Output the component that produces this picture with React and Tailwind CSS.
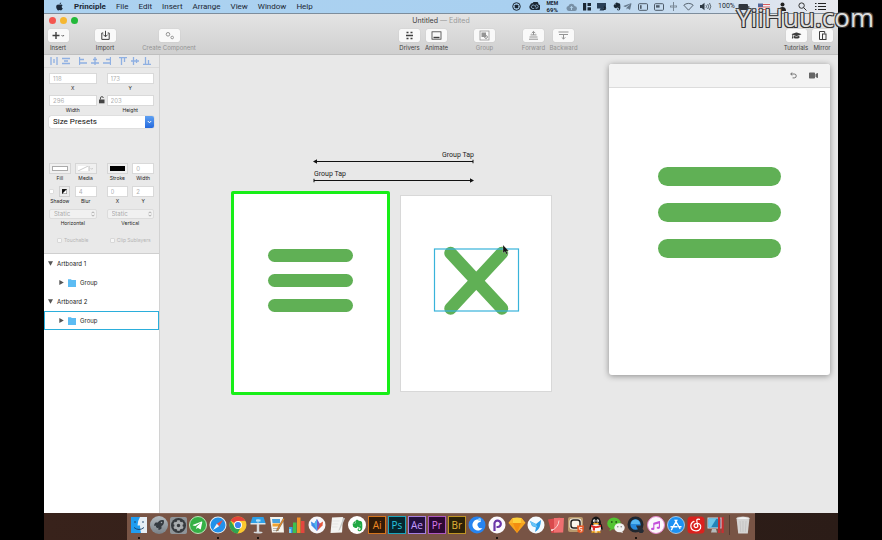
import { useState } from 'react'
import { FaApple, FaEvernote, FaTelegramPlane, FaRocket, FaCog, FaMusic, FaGraduationCap, FaVideo } from 'react-icons/fa'

const menus = ['File', 'Edit', 'Insert', 'Arrange', 'View', 'Window', 'Help']

function MenuBar() {
  return (
    <header className="h-[13px] shrink-0 flex items-center justify-between pl-[11px] pr-3 bg-gradient-to-r from-[#acd2f0] via-[#a9d0f0] via-60% to-[#e9e9ee] font-[Roboto,sans-serif] text-[8px] leading-[13px] text-[#1b2733]">
      <nav className="flex items-center gap-[10px]">
        <a href="#apple" aria-label="Apple"><FaApple className="w-[9px] h-[9px] text-[#1c2a3a]" /></a>
        <a href="#principle" className="font-bold">Principle</a>
        {menus.map((m) => (
          <a key={m} href={`#${m}`}>{m}</a>
        ))}
      </nav>
      <div className="flex items-center gap-[6px]">
        <svg className="w-[9px] h-[9px]" viewBox="0 0 9 9">
          <circle cx="4.5" cy="4.5" r="3.8" fill="none" stroke="#1b2733" />
          <rect x="2.7" y="2.7" width="3.6" height="3.6" rx=".6" fill="#1b2733" />
        </svg>
        <svg className="w-[11px] h-[9px] ml-[2px]" viewBox="0 0 11 9">
          <path d="M3.800 1A3 3 0 0 1 9.500 2.500 2.800 2.800 0 0 1 8.200 8H3A3 3 0 0 1 1 3.200 3 3 0 0 1 3.800 1z" fill="#1b2733" />
          <path d="M5.200 6.300a1.800 1.800 0 1 1 .2-2.800L7.400 5.600M6.200 3.500a1.700 1.700 0 1 1 .3 2.600" fill="none" stroke="#a9d0f0" strokeWidth=".7" />
        </svg>
        <div className="flex flex-col items-center font-bold">
          <span className="text-[5px] leading-[6px]">MEM</span>
          <span className="text-[6px] leading-[7px]">69%</span>
        </div>
        <svg className="w-[11px] h-[8px] ml-[2px]" viewBox="0 0 11 8">
          <path d="M2.8 8a2.6 2.6 0 0 1-.4-5.1A3.3 3.3 0 0 1 8.6 3 2.5 2.5 0 0 1 8.300 8z" fill="#7890a6" />
          <path d="M5.500 7V3.600M4 4.900l1.500-1.500L7 4.900" fill="none" stroke="#b8d8f0" strokeWidth=".9" />
        </svg>
        <svg className="w-[8px] h-[9px]" viewBox="0 0 8 9">
          <path d="M0 1h3.200v7.500H0zM4.500 1H8v3H4.500zM4.500 5.300H8v3.200H4.500z" fill="#1b2733" />
        </svg>
        <svg className="w-[10px] h-[9px]" viewBox="0 0 10 9">
          <path d="M0 1h9v5.500H6L7 8.500H2.500l1-2H0z" fill="#2a3f57" />
          <path d="M7 3.500l2.500 2.700H8.700v1.800H5.500l1.200-2z" fill="#1b2733" />
        </svg>
        <FaEvernote className="w-[8px] h-[9px]" />
        <FaTelegramPlane className="w-[9px] h-[9px] -ml-1 text-[#66798c]" />
        <svg className="w-[10px] h-[8px]" viewBox="0 0 10 8">
          <rect x=".5" y=".7" width="9" height="6.600" rx="1" fill="none" stroke="#4d5a68" />
          <rect x="2" y="2.200" width="1.600" height="3.600" fill="#4d5a68" />
        </svg>
        <svg className="w-[10px] h-[8px]" viewBox="0 0 10 8">
          <rect x=".5" y=".7" width="9" height="6.600" rx="1" fill="none" stroke="#4d5a68" />
          <rect x="2" y="2.200" width="3.600" height="2.400" fill="#4d5a68" />
        </svg>
        <svg className="w-[7px] h-[9px]" viewBox="0 0 7 9">
          <path d="M.5 3.500v2M2 3v3M3.500 0v9M5 3v3M6.500 3.500v2" stroke="#65717d" strokeWidth=".8" />
        </svg>
        <svg className="w-[11px] h-[9px]" viewBox="0 0 11 9">
          <path d="M.8 3.200a7 7 0 0 1 9.400 0L5.500 8.200z" fill="none" stroke="#3c4752" strokeWidth=".8" />
        </svg>
        <svg className="w-[12px] h-[9px]" viewBox="0 0 12 9">
          <path d="M0 3h1.800L4.500.8v7.400L1.800 6H0z" fill="#2f3a45" />
          <path d="M6 3.200q1 1.300 0 2.600M7.700 2q1.800 2.500 0 5M9.500 1q2.500 3.500 0 7" fill="none" stroke="#3c4752" strokeWidth=".8" />
        </svg>
        <span className="text-[7px]">100%</span>
        <svg className="w-[12px] h-[8px] -ml-[3px]" viewBox="0 0 12 8">
          <rect x=".5" y="1" width="9.500" height="6" rx="1" fill="#30363e" />
          <path d="M10.800 3v2" stroke="#30363e" />
        </svg>
        <svg className="w-[12px] h-[8px] ml-[2px]" viewBox="0 0 12 8">
          <rect y=".5" width="12" height="7" fill="#f1f1f4" />
          <path d="M5 1.500h7M0 4h12M0 6.500h12" stroke="#d65a60" />
          <rect y=".5" width="5" height="3.500" fill="#52669a" />
        </svg>
        <svg className="w-[7px] h-[9px] ml-[3px]" viewBox="0 0 7 9">
          <circle cx="3.500" cy="2.500" r="2" fill="#222" />
          <path d="M0 9q0-4 3.500-4T7 9z" fill="#222" />
        </svg>
        <svg className="w-[9px] h-[9px] ml-[6px]" viewBox="0 0 9 9">
          <circle cx="3.600" cy="3.600" r="2.700" fill="none" stroke="#333" />
          <path d="M5.600 5.600l2.900 2.900" stroke="#333" />
        </svg>
        <svg className="w-[11px] h-[9px] ml-[2px]" viewBox="0 0 11 9">
          <path d="M0 1.500h1.500M3 1.500h8M0 4.500h1.500M3 4.500h8M0 7.500h1.500M3 7.500h8" stroke="#222" />
        </svg>
      </div>
    </header>
  )
}

function Tool({ label, dim, children }) {
  return (
    <button className={`w-[22px] flex flex-col items-center gap-[2px] ${dim ? 'text-[#949494]' : 'text-[#3f3f3f]'}`}>
      <span className="w-[21px] h-[13px] rounded-[2px] bg-[#f9f9f9] flex items-center justify-center shadow-[0_0_1px_rgba(0,0,0,0.2)]">
        <svg className="w-[15px] h-[11px]" viewBox="0 0 15 11" fill="none" stroke="currentColor">{children}</svg>
      </span>
      <span className="text-[6px] leading-[8px] whitespace-nowrap">{label}</span>
    </button>
  )
}

function Toolbar() {
  return (
    <div className="shrink-0 border-t border-[#7d8d9c] border-b border-b-[#bfbfbf] bg-gradient-to-b from-[#e4e4e4] to-[#d0d0d0] pb-[2px]">
      <div className="grid grid-cols-[1fr_auto_1fr] items-center px-[5px] h-[13px]">
        <div className="flex gap-[4px]">
          <button aria-label="Close" className="w-[7px] h-[7px] rounded-full bg-[#f4564f]" />
          <button aria-label="Minimize" className="w-[7px] h-[7px] rounded-full bg-[#f5b731]" />
          <button aria-label="Zoom" className="w-[7px] h-[7px] rounded-full bg-[#23b93a]" />
        </div>
        <h1 className="text-[7px] leading-[12px] text-[#3c3c3c]">Untitled <span className="text-[#9a9a9a]">— Edited</span></h1>
      </div>
      <div className="flex pl-[3px] pr-[5px] pt-[2px]">
        <Tool label="Insert">
          <path d="M5 2v7M1.500 5.500h7" strokeWidth="1.400" />
          <path d="M10.500 5l1.300 1.300L13.100 5" strokeWidth=".8" />
        </Tool>
        <div className="w-[25px]" />
        <Tool label="Import"><path d="M5.300 3H3.800v6.400h7.400V3H9.700M7.500.8v5.700M5.300 4.600l2.200 2.200 2.200-2.200" /></Tool>
        <div className="w-[42px]" />
        <Tool label="Create Component" dim>
          <circle cx="6" cy="4.300" r="1.800" />
          <circle cx="10.200" cy="7.500" r="1.300" />
        </Tool>
        <div className="flex-1" />
        <div className="flex ml-2">
          <Tool label="Drivers">
            <path d="M4.500 2.500h2M8.500 2.500h2M4 5.500h7M4.500 8.500h2M8.500 8.500h2" strokeWidth="1.500" />
          </Tool>
          <div className="w-[5px]" />
          <Tool label="Animate">
            <rect x="3" y="1.800" width="9" height="7.400" strokeWidth=".8" />
            <path d="M4.500 7.500h6" strokeWidth="1.400" />
          </Tool>
          <div className="w-[26px]" />
          <Tool label="Group" dim>
            <rect x="3" y="1" width="9" height="9" strokeWidth=".8" />
            <rect x="5" y="3" width="3.500" height="3.500" fill="currentColor" />
            <circle cx="9" cy="7" r="1.400" />
          </Tool>
          <div className="w-[27px]" />
          <Tool label="Forward" dim>
            <path d="M3 9.200h9M3.500 7h8M4.500 4.900h6M7.500 5V1.500M5.700 3.200l1.800-1.800 1.800 1.800" />
          </Tool>
          <div className="w-[8px]" />
          <Tool label="Backward" dim>
            <path d="M2.500 2h10M3 4.500h9M7.500 4.500v4.500M5.700 7.300l1.800 1.800 1.800-1.800" />
          </Tool>
        </div>
        <div className="flex-1" />
        <Tool label="Tutorials"><FaGraduationCap x="2.500" y=".5" size="10" stroke="none" /></Tool>
        <div className="w-[4px]" />
        <Tool label="Mirror">
          <path d="M8 9.500H4.500v-8h5.200v2" />
          <rect x="7.500" y="4" width="3.500" height="5.500" />
        </Tool>
      </div>
    </div>
  )
}

const aligns = [
  { name: 'Distribute horizontally', d: 'M1 0v8M7 0v8M4 2v4', cls: 'mr-[4px]' },
  { name: 'Distribute vertically', d: 'M0 1.500h8M0 6.500h8M2 4h4', cls: 'mr-[9px]' },
  { name: 'Align left', d: 'M.5 0v8M1 2.500h4M1 6h7', cls: 'mr-[4px]' },
  { name: 'Align center', d: 'M4 0v8M2 2.500h4M0 6h8', cls: 'mr-[4px]' },
  { name: 'Align right', d: 'M7.500 0v8M3 2.500h4M0 6h7', cls: 'mr-[8px]' },
  { name: 'Align top', d: 'M0 .5h8M2.500 1v7M5.500 1v4', cls: 'mr-[4px]' },
  { name: 'Align middle', d: 'M0 4h8M2.500 0v8M5.500 2v4', cls: 'mr-[4px]' },
  { name: 'Align bottom', d: 'M0 7.500h8M2.500 0v7M5.500 3v4', cls: '' },
]

function Field({ label, value }) {
  return (
    <label className="flex-1 min-w-0 flex flex-col items-center">
      <input defaultValue={value} className="w-full h-[11px] px-[3px] bg-white border border-[#d9d9d9] text-[6px] leading-[9px] text-[#b0b0b0] outline-none" />
      <span className="leading-[8px]">{label}</span>
    </label>
  )
}

function Well({ label, children }) {
  return (
    <div className="flex-1 min-w-0 flex flex-col items-center">
      <button aria-label={label} className="w-full h-[11px] p-[2px] border border-[#d6d6d6] bg-[#f0f0f0] flex">{children}</button>
      <span className="leading-[8px]">{label}</span>
    </div>
  )
}

function StaticSelect({ label }) {
  return (
    <label className="flex-1 flex flex-col items-center">
      <span className="relative w-full flex">
        <select className="appearance-none w-full h-[10px] px-[4px] rounded-[2px] border border-[#dcdcdc] bg-[#f1f1f1] text-[6px] leading-[8px] text-[#aaa]">
          <option>Static</option>
        </select>
        <svg className="absolute right-[2px] top-[2px] w-[4px] h-[6px]" viewBox="0 0 4 6">
          <path d="M.5 2.300 2 .8l1.500 1.500M.5 3.700 2 5.200l1.500-1.500" fill="none" stroke="#999" strokeWidth=".8" />
        </svg>
      </span>
      <span className="leading-[9px]">{label}</span>
    </label>
  )
}

function Check({ label }) {
  return (
    <label className="flex-1 flex items-center justify-center gap-[2px] text-[#b5b5b5] whitespace-nowrap">
      <input type="checkbox" className="appearance-none w-[5px] h-[5px] rounded-[1px] bg-[#f6f6f6] border border-[#d8d8d8]" />
      {label}
    </label>
  )
}

function Inspector() {
  return (
    <section className="bg-[#e9e9e9] text-[5px] text-[#222] border-b border-[#cfcfcf] pb-[9px]">
      <div className="flex items-center h-[13px] px-[6px] border-b border-[#dadada]">
        {aligns.map((a) => (
          <button key={a.name} aria-label={a.name} className={a.cls}>
            <svg className="w-[8px] h-[8px]" viewBox="0 0 8 8">
              <path d={a.d} fill="none" stroke="#8fb0e2" strokeWidth="1.300" />
            </svg>
          </button>
        ))}
      </div>
      <div className="px-[5px] pt-[5px]">
        <div className="flex gap-[10px] mb-[3px]">
          <Field label="X" value="118" />
          <Field label="Y" value="173" />
        </div>
        <div className="flex mb-[2px]">
          <Field label="Width" value="296" />
          <svg className="w-[10px] h-[10px] px-[2px]" viewBox="0 0 6 10">
            <rect y="4.500" width="5.500" height="3.800" fill="#444" />
            <path d="M1.500 4.500V3a1.400 1.400 0 0 1 2.800 0" fill="none" stroke="#444" strokeWidth=".9" />
          </svg>
          <Field label="Height" value="203" />
        </div>
        <div className="relative flex">
          <select aria-label="Size Presets" className="appearance-none w-full h-[12px] px-[4px] rounded-[2px] bg-white shadow-[0_0_1px_rgba(0,0,0,0.4)] font-[Roboto,sans-serif] text-[8px] leading-[12px] text-[#111]">
            <option>Size Presets</option>
          </select>
          <span className="absolute right-0 inset-y-0 w-[9px] rounded-r-[2px] bg-gradient-to-b from-[#5ea0f2] to-[#2569dd] flex items-center justify-center pointer-events-none">
            <svg className="w-[5px] h-[4px]" viewBox="0 0 5 4"><path d="M.8 1 2.500 2.800 4.200 1" fill="none" stroke="#fff" /></svg>
          </span>
        </div>
        <div className="flex gap-[10px] pt-[35px] mb-[4px]">
          <div className="flex-1 flex gap-[4px]">
            <Well label="Fill"><span className="flex-1 h-full bg-white border border-[#aaa]" /></Well>
            <Well label="Media">
              <svg className="w-full h-full" viewBox="0 0 17 5" preserveAspectRatio="none">
                <path d="M0 0h11v5H0z" fill="#fff" />
                <path d="M0 5 11 0M12 0v5" fill="none" stroke="#bbb" strokeWidth=".8" />
                <path d="M13.500 2l1.300 1.300L16 2" fill="none" stroke="#bbb" strokeWidth=".7" />
              </svg>
            </Well>
          </div>
          <div className="flex-1 flex gap-[4px]">
            <Well label="Stroke"><span className="flex-1 h-full bg-black" /></Well>
            <Field label="Width" value="0" />
          </div>
        </div>
        <div className="flex gap-[10px] mb-[4px]">
          <div className="flex-1 flex gap-[4px]">
            <div className="flex-1 min-w-0 flex flex-col items-center">
              <label className="flex items-center gap-[5px] h-[11px]">
                <input type="checkbox" aria-label="Shadow" className="appearance-none w-[5px] h-[5px] rounded-[1px] bg-white border border-[#ddd]" />
                <span className="w-[11px] h-[11px] bg-[#ececec] border border-[#cfcfcf] flex items-center justify-center">
                  <svg className="w-[5px] h-[5px]" viewBox="0 0 5 5"><path d="M0 0h5v5H0z" fill="#fff" /><path d="M0 0h5L0 5z" fill="#111" /><path d="M.2.2h4.600v4.600H.2z" fill="none" stroke="#222" strokeWidth=".5" /></svg>
                </span>
              </label>
              <span className="leading-[8px]">Shadow</span>
            </div>
            <Field label="Blur" value="4" />
          </div>
          <div className="flex-1 flex gap-[4px]">
            <Field label="X" value="0" />
            <Field label="Y" value="2" />
          </div>
        </div>
        <div className="flex gap-[10px] mb-[8px]">
          <StaticSelect label="Horizontal" />
          <StaticSelect label="Vertical" />
        </div>
        <div className="flex gap-[10px] leading-[8px]">
          <Check label="Touchable" />
          <Check label="Clip Sublayers" />
        </div>
      </div>
    </section>
  )
}

function Layers() {
  const [selected, setSelected] = useState('Artboard 2')
  return (
    <section className="flex-1 bg-white text-[6px] text-[#222]">
      {['Artboard 1', 'Artboard 2'].map((name) => (
        <div key={name}>
          <button className="h-[19px] w-full flex items-center gap-[4px] pl-[4px]">
            <svg className="w-[5px] h-[5px]" viewBox="0 0 5 5"><path d="M0 .3h5L2.500 4.800z" fill="#555" /></svg>
            {name}
          </button>
          <button
            onClick={() => setSelected(name)}
            className={`h-[19px] w-full flex items-center gap-[4px] pl-[14px] border ${selected === name ? 'border-[#2baedb]' : 'border-transparent'}`}
          >
            <svg className="w-[5px] h-[5px]" viewBox="0 0 5 5"><path d="M.3 0 4.800 2.500.3 5z" fill="#555" /></svg>
            <svg className="w-[8px] h-[8px]" viewBox="0 0 8 8"><path d="M0 .3h3l.7.8H8v6.900H0z" fill="#5cbcf3" /></svg>
            Group
          </button>
        </div>
      ))}
    </section>
  )
}

function Canvas() {
  return (
    <main className="relative flex-1 overflow-hidden bg-[#e8e8e8]">
      <div className="absolute left-[153px] top-[96px] w-[161px] font-[Roboto,sans-serif] text-[7px] leading-[8px] text-[#222]">
        <div className="text-right">Group Tap</div>
        <svg className="w-full h-[5px] block" viewBox="0 0 161 5">
          <path d="M2 2.500h158" stroke="#111" strokeWidth="1.100" />
          <path d="M0 2.500 4 .3v4.400zM159.500.7h1v3.600h-1z" fill="#111" />
        </svg>
        <div className="mt-[6px] pl-px">Group Tap</div>
        <svg className="w-full h-[5px] block" viewBox="0 0 161 5">
          <path d="M1 2.500h158" stroke="#111" strokeWidth="1.100" />
          <path d="M161 2.500 157 .3v4.400zM.5.7h1v3.600h-1z" fill="#111" />
        </svg>
      </div>

      {/* First artboard, start state */}
      <div className="absolute left-[71px] top-[136px] w-[159px] h-[204px] rounded-[2px] border-3 border-[#17ee17] bg-white pt-[55px] flex flex-col items-center gap-3">
        <div className="w-[85px] h-[13px] rounded-full bg-[#60b055]" />
        <div className="w-[85px] h-[13px] rounded-full bg-[#60b055]" />
        <div className="w-[85px] h-[13px] rounded-full bg-[#60b055]" />
      </div>

      {/* Second artboard, cross with the group selected */}
      <div className="absolute left-[240px] top-[140px] w-[152px] h-[197px] bg-white border border-[#d8d8d8]">
        <svg className="w-full h-full" viewBox="0 0 150 195">
          <path d="M49.500 57 101 112.500M101 57 49.500 112.500" stroke="#60b055" strokeWidth="12.500" strokeLinecap="round" />
          <rect x="33.500" y="53" width="84" height="62" fill="none" stroke="#38b3da" strokeWidth="1.200" />
          <path d="M102 49v8l2-1.500 1.300 2.700 1.300-.7-1.200-2.500h2.300z" fill="#111" stroke="#ddd" strokeWidth=".3" />
        </svg>
      </div>

      {/* Preview window */}
      <div className="absolute right-[8px] top-[9px] w-[221px] h-[311px] rounded-[3px] overflow-hidden bg-white shadow-[0_1px_6px_rgba(0,0,0,0.4)]">
        <div className="h-[24px] bg-[#f3f3f3] border-b border-[#dcdcdc] flex items-center justify-end gap-[12px] pr-[12px] text-[#666]">
          <button aria-label="Rewind">
            <svg className="w-[7px] h-[7px]" viewBox="0 0 7 7"><path d="M2.300.5.700 2l1.600 1.500M.8 2h3.500a1.900 1.900 0 0 1 0 3.900H2.600" fill="none" stroke="currentColor" strokeWidth=".9" /></svg>
          </button>
          <button aria-label="Record"><FaVideo className="w-[9px] h-[9px]" /></button>
        </div>
        <div className="pt-[79px] flex flex-col items-center gap-[17px]">
          <div className="w-[123px] h-[19px] rounded-full bg-[#60b055]" />
          <div className="w-[123px] h-[19px] rounded-full bg-[#60b055]" />
          <div className="w-[123px] h-[19px] rounded-full bg-[#60b055]" />
        </div>
      </div>
    </main>
  )
}

function Adobe({ name, cls }) {
  return (
    <span className={`w-[18px] h-[18px] border flex items-center justify-center font-['Open_Sans'] font-medium text-[10px] leading-[16px] ${cls}`}>{name}</span>
  )
}

function Round({ cls, children }) {
  return <span className={`w-[18px] h-[18px] rounded-full flex items-center justify-center ${cls}`}>{children}</span>
}

function Pic({ children }) {
  return <svg className="w-[18px] h-[18px]" viewBox="0 0 18 18">{children}</svg>
}

const apps = [
  { name: 'Finder', open: true, icon: (
    <Pic>
      <path d="M1 1h16v16H1z" fill="#e6eef6" />
      <path d="M1 1h9q-2.500 4-2.500 8.500H10q0 4 1 7.500H1z" fill="#1f9cf0" />
      <path d="M5 5v2M13 5v2M4 11.500q5 4 10 0" fill="none" stroke="#173c66" strokeWidth=".9" />
    </Pic>
  ) },
  { name: 'Launchpad', icon: <Round cls="bg-gradient-to-b from-[#b4bbc0] to-[#798188] text-[#353b41]"><FaRocket size={10} /></Round> },
  { name: 'Preferences', icon: (
    <span className="w-[17px] h-[17px] rounded-[2px] bg-[#8f9498] flex items-center justify-center">
      <span className="w-[15px] h-[15px] rounded-full bg-[#363a3e] flex items-center justify-center text-[#a9adb0]"><FaCog size={11} /></span>
    </span>
  ) },
  { name: 'Telegram', icon: <Round cls="bg-[#35b045] border border-[#b9e5b9] text-white"><FaTelegramPlane size={11} /></Round> },
  { name: 'Safari', open: true, icon: (
    <Pic>
      <circle cx="9" cy="9" r="8.500" fill="#e9edf0" />
      <circle cx="9" cy="9" r="7.500" fill="#2191ea" />
      <path d="M14 4 10.200 10.200 7.800 7.800z" fill="#f04c3e" />
      <path d="M4 14 7.800 7.800l2.400 2.400z" fill="#f5f5f5" />
    </Pic>
  ) },
  { name: 'Chrome', icon: (
    <Pic>
      <circle cx="9" cy="9" r="8.500" fill="#fbc82f" />
      <path d="M9 9 1.600 4.800A8.500 8.500 0 0 1 16.400 4.800L9 5z" fill="#e5443a" />
      <path d="M1.600 4.800A8.500 8.500 0 0 0 8.500 17.500L12 11 9 9 5.500 11z" fill="#2fa552" />
      <circle cx="9" cy="9" r="4" fill="#fff" />
      <circle cx="9" cy="9" r="3.100" fill="#3f83ee" />
    </Pic>
  ) },
  { name: 'Keynote', open: true, icon: (
    <Pic>
      <path d="M3.500 1h11l2 6H1.500z" fill="#2da0e8" />
      <path d="M1.500 7h15v1.500h-15z" fill="#d8e6ee" />
      <path d="M9 3v13M8.200 8h1.600v8H8.200z" stroke="#dfe3e6" fill="#dfe3e6" strokeWidth=".7" />
      <path d="M7 3.500h4.500v2H7z" fill="#b9e2fa" />
      <ellipse cx="9" cy="16.500" rx="4.500" ry="1" fill="#d7dadd" />
    </Pic>
  ) },
  { name: 'Pages', icon: (
    <Pic>
      <path d="M2 1h13l1 15.500H4z" fill="#f6f3ec" />
      <path d="M4 3h8v4H4.500z" fill="#4aa3df" />
      <path d="M4.500 7.500h8v3h-8z" fill="#f0a330" />
      <path d="M5 12.500h7M5 14.500h6" stroke="#999" strokeWidth=".7" />
      <path d="M15.500 2 9 13l-.6 2.200L10.200 14 16.800 3z" fill="#f08b22" stroke="#43484d" strokeWidth=".4" />
    </Pic>
  ) },
  { name: 'Numbers', icon: (
    <Pic>
      <path d="M1 11h3.500v6H1z" fill="#2fa8e8" />
      <path d="M5 6.500h3.500V17H5z" fill="#3ec14c" />
      <path d="M9 1.500h3.500V17H9z" fill="#f0922b" />
      <path d="M13 5h3.500v12H13z" fill="#e3463e" />
      <path d="M1 13h2v4H1z" fill="#7fd0f5" />
    </Pic>
  ) },
  { name: 'Vectors', icon: (
    <Pic>
      <circle cx="9" cy="9" r="8.500" fill="#f7f7fa" />
      <path d="M9 15 3.500 9.500 3 5.500 7 8z" fill="#3f8cea" />
      <path d="M9 15l5.500-5.500.5-4L11 8z" fill="#e5573d" />
      <path d="M9 15 6 8l3-5 3 5z" fill="#7059c8" />
      <path d="M9 15 6 8l3-5z" fill="#4cb6ef" />
    </Pic>
  ) },
  { name: 'Notes', icon: (
    <Pic>
      <path d="M4 1.500 15 1l-1 15.500-11.500.5z" fill="#f3f3f1" />
      <path d="M15.500 1.500 11 13l-.5 2 1.500-1.500 5-11z" fill="#c7c9c9" />
      <path d="M4.500 5h7M4.300 8h6M4 11h5.500" stroke="#dcdcda" strokeWidth=".6" />
    </Pic>
  ) },
  { name: 'Evernote', icon: <Round cls="bg-white text-[#20a744]"><FaEvernote size={13} /></Round> },
  { name: 'Illustrator', icon: <Adobe name="Ai" cls="bg-[#321b08] border-[#d5741c] text-[#f08a24]" /> },
  { name: 'Photoshop', icon: <Adobe name="Ps" cls="bg-[#06262f] border-[#1ba5bd] text-[#2ac4df]" /> },
  { name: 'After Effects', icon: <Adobe name="Ae" cls="bg-[#25103f] border-[#a67fe0] text-[#c49cff]" /> },
  { name: 'Premiere', icon: <Adobe name="Pr" cls="bg-[#2d0833] border-[#ad57c0] text-[#d77bea]" /> },
  { name: 'Bridge', icon: <Adobe name="Br" cls="bg-[#2c2208] border-[#bf9423] text-[#e1b43a]" /> },
  { name: 'Shell', icon: (
    <Pic>
      <circle cx="9" cy="9" r="8.500" fill="#2684f0" />
      <path d="M13 4.500a5.500 5.500 0 1 0 1.500 7.500 4 4 0 0 1-5-2.500c-.5-2 1-3.500 3-3.500z" fill="#fff" />
      <circle cx="11.500" cy="3.500" r="1.600" fill="#8fd0ff" />
    </Pic>
  ) },
  { name: 'Principle', open: true, icon: (
    <Pic>
      <circle cx="9" cy="9" r="8.500" fill="#fbf9fd" />
      <path d="M6.500 15V8.500A3.200 3.200 0 1 1 9.700 11H8.500" fill="none" stroke="#6a35a8" strokeWidth="2.200" />
    </Pic>
  ) },
  { name: 'Sketch', icon: (
    <Pic>
      <path d="M4.500 2h9L17.500 7 9 17 .5 7z" fill="#f7a41d" />
      <path d="M4.500 2 9 1.600 13.500 2 13 7H5z" fill="#fdd13c" />
      <path d="M5 7h8l-4 10z" fill="#f28d10" />
      <path d="M.5 7 4.500 2 5 7zM17.500 7l-4-5L13 7z" fill="#fbb52c" />
    </Pic>
  ) },
  { name: 'Bird', icon: (
    <Pic>
      <circle cx="9" cy="9" r="8.500" fill="#f4f9fd" />
      <path d="M3 5l6 3 5-4-.5 4q-1 5.500-5.500 8l1-4.500-4-1.500z" fill="#2a9be8" />
      <path d="M3 5l6 3 1.500 3.500-5-1.500z" fill="#67c3f7" />
    </Pic>
  ) },
  { name: 'PDF', icon: (
    <Pic>
      <path d="M1 3.500 13 1.500l2.500 14.500-11 1z" fill="#d94a4d" />
      <path d="M7 2h10l-.8 14.500H7z" fill="#ef6f70" />
      <path d="M4.500 14.500q7-3 7.500-10" fill="none" stroke="#fbd9d7" strokeWidth="1" />
      <circle cx="5" cy="14" r="1" fill="#fbd9d7" />
    </Pic>
  ) },
  { name: 'Photo editor', icon: (
    <Pic>
      <rect x="1" y="1" width="15" height="15" rx="2" fill="#b99a6e" />
      <rect x="2.500" y="2.500" width="12" height="11" rx="3" fill="#f9f5eb" />
      <rect x="4" y="4" width="9" height="8" rx="2.500" fill="none" stroke="#282522" strokeWidth="1.500" />
      <path d="M10 9.500h7l-.6 6.500-2.900 1.200-2.900-1.200z" fill="#e95b28" />
      <path d="M15.200 11.500h-2.800v1.800h2.400v1.600l-1.300.5" fill="none" stroke="#fff" strokeWidth=".8" />
    </Pic>
  ) },
  { name: 'QQ', icon: (
    <Pic>
      <path d="M3.500 8Q2 12 2.500 14l2-1.500h9l2 1.500q.5-2-1-6z" fill="#121212" />
      <ellipse cx="9" cy="7.500" rx="5" ry="7" fill="#161616" />
      <ellipse cx="9" cy="12.500" rx="5" ry="4.500" fill="#f7f7f7" />
      <ellipse cx="7.300" cy="4.800" rx="1.200" ry="1.600" fill="#fff" />
      <ellipse cx="10.700" cy="4.800" rx="1.200" ry="1.600" fill="#fff" />
      <circle cx="7.600" cy="5" r=".5" />
      <circle cx="10.400" cy="5" r=".5" />
      <ellipse cx="9" cy="7.600" rx="3" ry=".9" fill="#f3a51d" />
      <path d="M4 8.800q5 2.700 10 0v2q-3 1.500-6 1.200v2.500H5.800v-2.800L4 10.800z" fill="#dc2c26" />
      <path d="M4.500 16.500q2-1.300 4 0M9.500 16.500q2-1.300 4 0" stroke="#f3a51d" strokeWidth="1.500" />
    </Pic>
  ) },
  { name: 'WeChat', icon: (
    <Pic>
      <path d="M3 12.500 2.500 15l3-1.500z" fill="#52c332" />
      <ellipse cx="7" cy="7.500" rx="6.800" ry="6" fill="#52c332" />
      <circle cx="4.800" cy="6" r=".9" fill="#245c17" />
      <circle cx="9.200" cy="6" r=".9" fill="#245c17" />
      <path d="M15 15l1 2-3-1z" fill="#eee" />
      <ellipse cx="12.500" cy="11.800" rx="5.200" ry="4.500" fill="#f2f2f2" />
      <circle cx="10.800" cy="10.800" r=".7" fill="#777" />
      <circle cx="14.200" cy="10.800" r=".7" fill="#777" />
    </Pic>
  ) },
  { name: 'QuickTime', open: true, icon: (
    <Pic>
      <circle cx="8.500" cy="8.500" r="6.600" fill="#2688da" stroke="#20262e" strokeWidth="2.800" />
      <path d="M9 9.500h4.500l3.500 5.500-1.500 2h-3z" fill="#252b34" />
      <path d="M4 8a4.500 4.500 0 0 1 9 0z" fill="#56b7f3" />
    </Pic>
  ) },
  { name: 'iTunes', icon: <Round cls="bg-[#fbf7fb] border border-[#e485cc] text-[#c44fdb]"><FaMusic size={9} /></Round> },
  { name: 'App Store', icon: (
    <Pic>
      <circle cx="9" cy="9" r="8.500" fill="#1d92f3" stroke="#cfe8fb" strokeWidth=".7" />
      <path d="M9.900 4.200 5.400 12M8.100 4.200 12.900 12.500M4 10.800h6M12 10.800h2M5 12.800l-.5.900" fill="none" stroke="#fff" strokeWidth="1.400" strokeLinecap="round" />
    </Pic>
  ) },
  { name: 'NetEase Music', icon: (
    <Pic>
      <rect x=".5" y=".5" width="17" height="17" rx="3.500" fill="#db211d" />
      <path d="M12.500 3.300Q9.500 2.600 9.800 5l1 5.200a1.900 1.900 0 1 1-2.600-2.300q2.800-1.300 4.700.5c2 2.200.6 6.300-3.700 6.400C2.700 14.900 2.300 7.500 7 5.400" fill="none" stroke="#fff" strokeWidth="1.200" strokeLinecap="round" />
    </Pic>
  ) },
  { name: 'Parallels', icon: (
    <Pic>
      <path d="M.5 1.500h15v11H.5z" fill="#d5dde2" />
      <path d="M1.500 2.500h12v9h-12z" fill="#2384b9" />
      <path d="M1.500 2.500h8L4 11.500H1.500z" fill="#6ec6e9" />
      <path d="M5 13h4l1 3.500H4z" fill="#b6babc" />
      <path d="M11 1h2.300v16H11zM14.500 1h2.300v16h-2.300z" fill="#c92f32" />
    </Pic>
  ) },
]

function Dock() {
  return (
    <footer className="shrink-0 h-[27px] px-[83px] bg-gradient-to-r from-[#38221b] to-[#2b1c17]">
      <div className="h-full bg-[#785445] border-t border-[#8a6a5d] px-[3px] flex items-end justify-between">
        {apps.map((app) => (
          <button key={app.name} aria-label={app.name} className="flex flex-col items-center gap-[3px] pb-px">
            <span className="h-[18px] flex items-center">{app.icon}</span>
            <span className={`w-[2px] h-[2px] rounded-full ${app.open ? 'bg-black' : ''}`} />
          </button>
        ))}
        <span className="w-px h-[20px] mb-[5px] mx-[2px] bg-[#563b31]" />
        <button aria-label="Trash" className="pb-[6px]">
          <Pic>
            <path d="M2.500 2h13L13.800 17.500H4.200z" fill="#d5d4d3" />
            <ellipse cx="9" cy="2.200" rx="6.500" ry="1.400" fill="#f2f2f2" stroke="#bdbdbd" strokeWidth=".4" />
            <path d="M6 5l.7 11M9 5v11M12 5l-.7 11" stroke="#bcbbba" strokeWidth=".6" />
          </Pic>
        </button>
      </div>
    </footer>
  )
}

export default function App() {
  return (
    <div className="relative h-screen bg-black px-11 font-[Inter,sans-serif] overflow-hidden">
      <div className="h-full flex flex-col">
        <MenuBar />
        <Toolbar />
        <div className="flex-1 min-h-0 flex">
          <aside className="w-[116px] shrink-0 flex flex-col border-r border-[#d2d2d2]">
            <Inspector />
            <Layers />
          </aside>
          <Canvas />
        </div>
        <Dock />
      </div>
      <div className="absolute right-2 top-[2px] font-['Open_Sans',sans-serif] font-medium text-[26px] leading-[30px] text-[#dedede] [text-shadow:-1px_-1px_0_#444,1px_-1px_0_#444,-1px_1px_0_#333,1px_1px_0_#333,0_1px_0_#333,1px_0_0_#333]">
        YiiHuu.com
      </div>
    </div>
  )
}
